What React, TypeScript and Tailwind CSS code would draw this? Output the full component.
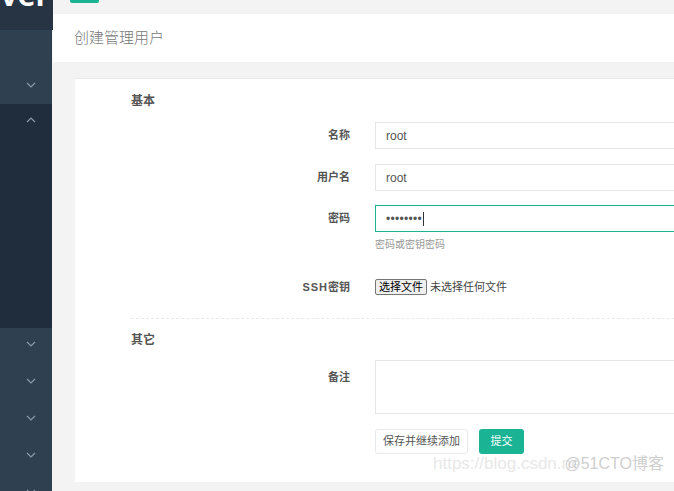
import React from 'react';

const Chevron: React.FC<{ up?: boolean }> = ({ up }) => (
  <svg width="10" height="6" viewBox="0 0 10 6" className="text-[#8a9bab]">
    <polyline
      points={up ? '1,5 5,1 9,5' : '1,1 5,5 9,1'}
      fill="none"
      stroke="currentColor"
      strokeWidth="1.2"
    />
  </svg>
);

const NavItem: React.FC<{ up?: boolean; chevron?: boolean }> = ({ up, chevron = true }) => (
  <div className="h-[37px] shrink-0 flex items-center justify-end pr-[16px]">
    {chevron && <Chevron up={up} />}
  </div>
);

const Sidebar: React.FC = () => (
  <div className="w-[52px] shrink-0 flex flex-col bg-[#2f4050] h-full">
    <div className="h-[30px] shrink-0 w-[53px] bg-[#263443] overflow-hidden flex justify-end">
      <span className="text-white font-bold text-[30px] leading-none -mt-[20px] mr-[4px] whitespace-nowrap" style={{ fontFamily: '"Open Sans", sans-serif' }}>
        Jumpserver
      </span>
    </div>
    <NavItem chevron={false} />
    <div className="h-[37px] shrink-0 flex items-start pt-[15px] justify-end pr-[16px]">
      <Chevron />
    </div>
    <div className="bg-[#1f2d3d] h-[224px] shrink-0">
      <div className="h-[32px] flex items-center justify-end pr-[16px]">
        <Chevron up />
      </div>
    </div>
    <div className="shrink-0 -mt-[3px]">
      <NavItem />
      <NavItem />
      <NavItem />
      <NavItem />
      <NavItem />
    </div>
  </div>
);

const Label: React.FC<{ children: React.ReactNode }> = ({ children }) => (
  <div className="w-[275px] shrink-0 text-right text-[11px] font-bold text-[#555]">{children}</div>
);

export default function App() {
  return (
    <div
      className="relative w-[674px] h-[491px] overflow-hidden flex bg-[#f3f3f4]"
      style={{ fontFamily: '"Liberation Sans", "Noto Sans CJK SC", sans-serif' }}
    >
      <Sidebar />
      <div className="flex-1 min-w-0 flex flex-col">
        <div className="h-[14px] pl-[18px]">
          <div className="w-[29px] h-[3px] bg-[#1ab394] rounded-b-[2px]" />
        </div>
        <div className="h-[48px] bg-white ml-[1px] flex items-center pl-[21px]">
          <span className="text-[15px] text-[#777] font-light">创建管理用户</span>
        </div>
        <div className="pt-[16px] pl-[23px]">
          <div className="w-[700px] bg-white border-t border-[#e7eaec] pt-[13px] pb-[28px]">
            <div className="pl-[56px] h-[18px] text-[12px] font-bold text-[#555] leading-[18px]">基本</div>

            <div className="flex items-center h-[27px] mt-[12px]">
              <Label>名称</Label>
              <div className="ml-[25px] flex-1 h-[27px] border border-[#e5e6e7] flex items-center px-[10px] text-[12px] text-[#555]">root</div>
            </div>
            <div className="flex items-center h-[27px] mt-[15px]">
              <Label>用户名</Label>
              <div className="ml-[25px] flex-1 h-[27px] border border-[#e5e6e7] flex items-center px-[10px] text-[12px] text-[#555]">root</div>
            </div>
            <div className="flex items-center h-[27px] mt-[14px]">
              <Label>密码</Label>
              <div className="ml-[25px] flex-1 h-[27px] border border-[#1ab394] flex items-center px-[10px] text-[12px] text-[#555] tracking-[0.3px]">
                ••••••••
                <span className="ml-[1px] w-[1px] h-[14px] bg-[#333]" />
              </div>
            </div>
            <div className="ml-[300px] mt-[6px] h-[14px] text-[10px] text-[#999] leading-[14px]">密码或密钥密码</div>

            <div className="flex items-center h-[16px] mt-[27px]">
              <Label>
                <span className="tracking-[1px]">SSH</span>密钥
              </Label>
              <div className="ml-[25px] flex items-center">
                <div className="h-[16px] px-[3px] bg-[#efefef] border border-[#767676] rounded-[2px] text-[11px] text-black flex items-center">选择文件</div>
                <span className="ml-[3px] text-[11px] text-[#444]">未选择任何文件</span>
              </div>
            </div>

            <div className="ml-[56px] mt-[23px] border-t border-dashed border-[#e7eaec]" />

            <div className="pl-[56px] mt-[12px] h-[18px] text-[12px] font-bold text-[#555] leading-[18px]">其它</div>

            <div className="flex items-start mt-[11px]">
              <div className="pt-[9px]">
                <Label>备注</Label>
              </div>
              <div className="ml-[25px] flex-1 h-[54px] border border-[#e5e6e7]" />
            </div>

            <div className="flex mt-[15px] ml-[300px] gap-[11px]">
              <div className="h-[25px] w-[93px] border border-[#e7eaec] rounded-[3px] bg-white flex items-center justify-center text-[11px] text-[#555]">保存并继续添加</div>
              <div className="h-[25px] w-[45px] rounded-[3px] bg-[#1ab394] flex items-center justify-center text-[11px] text-white">提交</div>
            </div>
          </div>
        </div>
      </div>

      <div className="absolute left-[433px] top-[451px] flex items-center whitespace-nowrap pointer-events-none">
        <span className="text-[17px] text-[#e8e8e8]" style={{ fontFamily: '"Liberation Sans", sans-serif' }}>https://blog.csdn.ne</span>
        <span className="-ml-[16px] text-[16px] text-[#cfcfcf]">@51CTO博客</span>
      </div>
    </div>
  );
}
